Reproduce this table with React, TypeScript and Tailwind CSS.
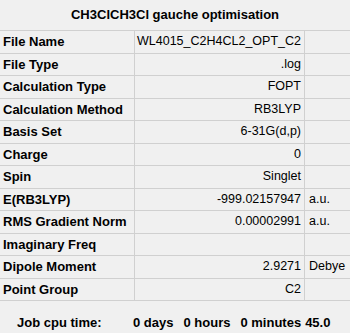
const rows: [string, string, string][] = [
  ['File Name', 'WL4015_C2H4CL2_OPT_C2', ''],
  ['File Type', '.log', ''],
  ['Calculation Type', 'FOPT', ''],
  ['Calculation Method', 'RB3LYP', ''],
  ['Basis Set', '6-31G(d,p)', ''],
  ['Charge', '0', ''],
  ['Spin', 'Singlet', ''],
  ['E(RB3LYP)', '-999.02157947', 'a.u.'],
  ['RMS Gradient Norm', '0.00002991', 'a.u.'],
  ['Imaginary Freq', '', ''],
  ['Dipole Moment', '2.9271', 'Debye'],
  ['Point Group', 'C2', ''],
]

export default function App() {
  return (
    <div className="w-[350px] h-[333px] bg-[#f0f0f0] text-[#000] font-['Liberation_Sans',Arial,sans-serif] text-[13px] overflow-hidden">
      <div className="h-[30px] flex items-center justify-center font-bold">
        CH3ClCH3Cl gauche optimisation
      </div>
      <div className="border-t border-[#d0d0d0]">
        {rows.map(([label, value, unit]) => (
          <div key={label} className="flex h-[22.5px] border-b border-[#d0d0d0] items-center">
            <div className="w-[135px] pl-[3px] font-bold border-r border-[#d0d0d0] h-full flex items-center">
              {label}
            </div>
            <div className="w-[170px] pr-[3px] text-[12.5px] text-right border-r border-[#d0d0d0] h-full flex items-center justify-end">
              {value}
            </div>
            <div className="flex-1 pl-[4px] text-[12.5px]">{unit}</div>
          </div>
        ))}
      </div>
      <div className="flex font-bold pt-[12px] pl-[17px]">
        <span className="w-[116px]">Job cpu time:</span>
        <div className="flex gap-[10px]">
          <span>0 days</span>
          <span>0 hours</span>
          <span className="flex gap-[4px]">
            <span>0 minutes</span>
            <span>45.0</span>
          </span>
        </div>
      </div>
    </div>
  )
}
